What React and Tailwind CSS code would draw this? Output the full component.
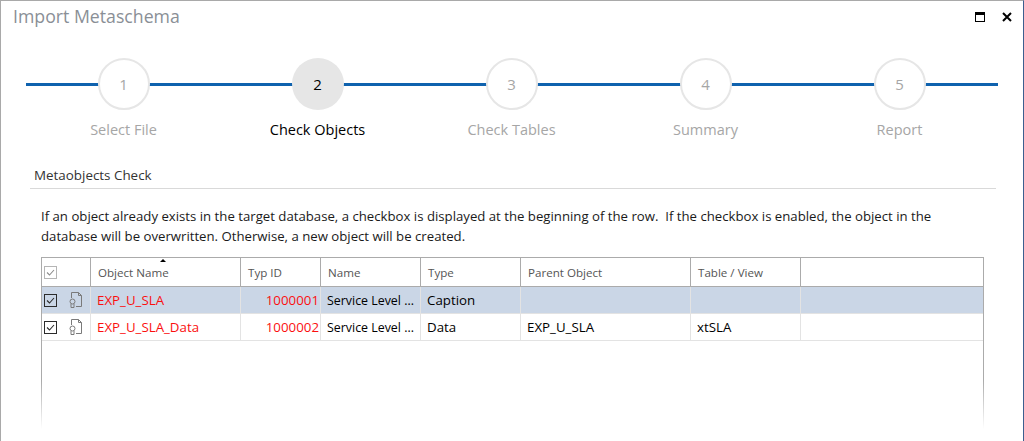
// Import Metaschema dialog, step 2 of the wizard
const STEPS = ['Select File', 'Check Objects', 'Check Tables', 'Summary', 'Report']
const COLS = 'grid grid-cols-[49px_150px_80px_100px_100px_170px_110px_1fr]'

const ROWS = [
  { name: 'EXP_U_SLA', id: '1000001', title: 'Service Level ...', type: 'Caption', parent: '', view: '' },
  { name: 'EXP_U_SLA_Data', id: '1000002', title: 'Service Level ...', type: 'Data', parent: 'EXP_U_SLA', view: 'xtSLA' },
]

function Check({ muted }) {
  return (
    <svg width="13" height="13" viewBox="0 0 13 13" className="block">
      <rect x="0.5" y="0.5" width="12" height="12" fill={muted ? '#fff' : 'none'} stroke={muted ? '#b5b5b5' : '#2b2b2b'} />
      <path d="M3 6.5 L5.5 9 L10 4" fill="none" stroke={muted ? '#8c8c8c' : '#2b2b2b'} strokeWidth="1.1" />
    </svg>
  )
}

function ObjectIcon() {
  return (
    <svg width="14" height="17" viewBox="0 0 14 17" fill="none" stroke="#7a7a7a" strokeWidth="1" className="block">
      <path d="M2.5 6 V0.5 H9.5 L12.5 3.5 V14.5 H7" />
      <path d="M9.5 0.5 V3.5 H12.5" />
      <circle cx="3.5" cy="9.5" r="2.5" />
      <path d="M2 12 V15.5 H5 V12" />
    </svg>
  )
}

function Step({ label, index, active }) {
  return (
    <div className="flex flex-col items-center">
      <div
        className={
          active
            ? 'relative w-[52px] h-[52px] rounded-full bg-[#e6e6e6] flex items-center justify-center pr-[1px] text-[15px] text-black'
            : 'relative w-[52px] h-[52px] rounded-full bg-white border-2 border-[#e6e6e6] flex items-center justify-center pr-[1px] text-[15px] text-[#a6a6a6]'
        }
      >
        {index}
      </div>
      <div className={active ? 'mt-[10px] pr-[1px] text-[14.5px] leading-5 text-black' : 'mt-[10px] pr-[1px] text-[14.5px] leading-5 text-[#a6a6a6]'}>
        {label}
      </div>
    </div>
  )
}

export default function App() {
  return (
    <div
      className="relative w-[1024px] h-[441px] overflow-hidden bg-white border-t border-t-[#a9a9a9] border-l border-l-[#a9a9a9] border-r border-r-[#3c5f8f] text-black"
      style={{ fontFamily: '"Open Sans", "Noto Sans", sans-serif' }}
    >
      <div className="flex items-center justify-between h-[31px] pl-[12px] pr-[11px]">
        <div className="text-[17.7px] text-[#8a8f96]">Import Metaschema</div>
        <div className="flex items-center gap-[17px]">
          <div className="w-[10px] h-[10px] border border-black border-t-[3px]" />
          <svg width="10" height="10" viewBox="0 0 10 10" stroke="#000" strokeWidth="2"><path d="M1 1 L9 9 M9 1 L1 9" /></svg>
        </div>
      </div>

      <div className="relative mt-[26px] ml-[26px] w-[970px]">
        <div className="absolute left-[-1px] right-[-1px] top-[25px] h-[3px] bg-[#0f62ae]" />
        <div className="relative grid grid-cols-5">
          {STEPS.map((s, i) => (
            <Step key={s} label={s} index={i + 1} active={i === 1} />
          ))}
        </div>
      </div>

      <div className="mt-[24px] ml-[29px] mr-[27px] h-[25px] pl-[4px] pt-[1px] border-b border-[#d9d9d9] text-[13.4px] leading-[20px] text-[#333]">
        Metaobjects Check
      </div>

      <p className="mt-[17px] ml-[40px] w-[930px] text-[13.2px] leading-[20px] text-[#1a1a1a]">
        If an object already exists in the target database, a checkbox is displayed at the beginning of the row.&nbsp; If the checkbox is enabled, the object in the database will be overwritten. Otherwise, a new object will be created.
      </p>

      <div className="mt-[11px] ml-[40px] w-[943px] h-[191px] border border-[#ababab] text-[13.3px]">
        <div className={`${COLS} h-[29px] border-b border-[#ababab] text-[11.6px] text-[#555]`}>
          <div className="flex items-center pl-[2px] border-r border-[#ababab]"><Check muted /></div>
          <div className="relative flex items-center pl-[7px] pt-[1px] border-r border-[#ababab]">
            Object Name
            <div className="absolute left-[69px] top-[1px] w-0 h-0 border-x-[3px] border-x-transparent border-b-[3px] border-b-black" />
          </div>
          <div className="flex items-center pl-[7px] pt-[1px] border-r border-[#ababab]">Typ ID</div>
          <div className="flex items-center pl-[7px] pt-[1px] border-r border-[#ababab]">Name</div>
          <div className="flex items-center pl-[7px] pt-[1px] border-r border-[#ababab]">Type</div>
          <div className="flex items-center pl-[7px] pt-[1px] border-r border-[#ababab]">Parent Object</div>
          <div className="flex items-center pl-[7px] pt-[1px] border-r border-[#ababab]">Table / View</div>
          <div />
        </div>
        {ROWS.map((r, i) => (
          <div key={r.name} className={`${COLS} h-[27px] border-b border-[#e3e3e3] ${i === 0 ? 'bg-[#cad6e6]' : 'bg-white'}`}>
            <div className="flex items-center gap-[12px] pl-[2px] border-r border-[#e3e3e3]"><Check /><ObjectIcon /></div>
            <div className="flex items-center pl-[6px] pt-[2px] border-r border-[#e3e3e3] text-[#fb0f0f]">{r.name}</div>
            <div className="flex items-center justify-end pr-[1px] pt-[2px] border-r border-[#e3e3e3] text-[#fb0f0f]">{r.id}</div>
            <div className="flex items-center pl-[6px] pt-[2px] border-r border-[#e3e3e3] text-[12.4px]">{r.title}</div>
            <div className="flex items-center pl-[6px] pt-[2px] border-r border-[#e3e3e3]">{r.type}</div>
            <div className="flex items-center pl-[6px] pt-[2px] border-r border-[#e3e3e3]">{r.parent}</div>
            <div className="flex items-center pl-[6px] pt-[2px] border-r border-[#e3e3e3]">{r.view}</div>
            <div />
          </div>
        ))}
      </div>

      {/* bottom fade over the dialog */}
      <div className="absolute left-[-1px] right-[-1px] bottom-0 h-[60px] bg-gradient-to-b from-white/0 to-white to-80%" />
    </div>
  )
}
